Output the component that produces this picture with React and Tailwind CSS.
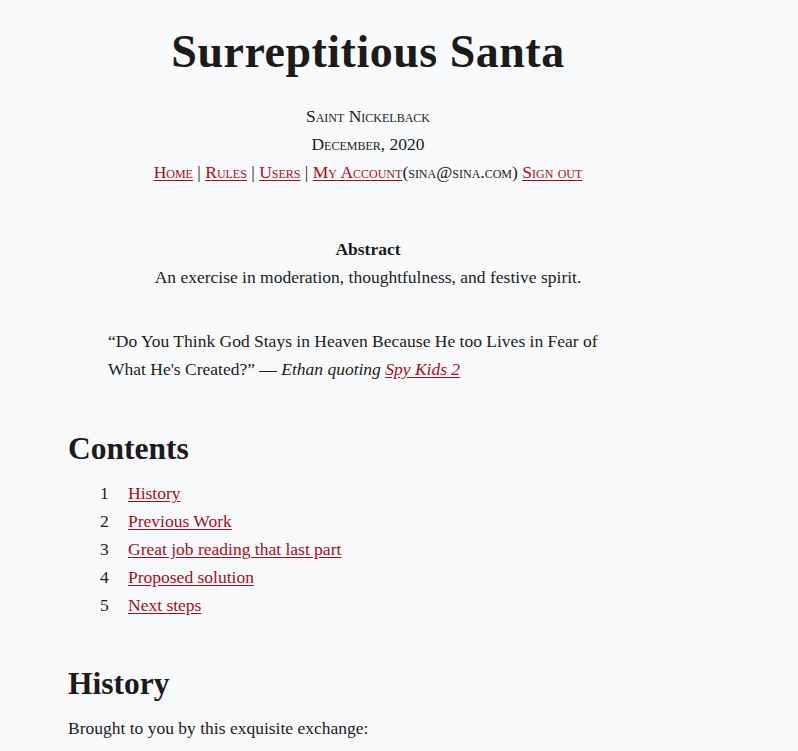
import React from 'react';

const toc = ['History', 'Previous Work', 'Great job reading that last part', 'Proposed solution', 'Next steps'];

const A = ({ children, className = '' }) => (
  <a href="#" className={`text-[#a50d1f] underline underline-offset-2 ${className}`}>{children}</a>
);

export default function App() {
  return (
    <div className="min-h-[751px] bg-[#f8f9fa] text-[#1c1b1b] font-['Liberation_Serif',serif] text-[17.5px] leading-[28px]">
      <div className="w-[600px] ml-[68px] pt-[26px]">
        {/* Title block */}
        <h1 className="text-center font-bold text-[46px] leading-[52px] tracking-[0.5px]">Surreptitious Santa</h1>
        <div className="mt-[24px] text-center [font-variant:small-caps]">
          <p>Saint Nickelback</p>
          <p>December, 2020</p>
          <p>
            <A>Home</A> | <A>Rules</A> | <A>Users</A> | <A>My Account</A>(sina@sina.com) <A>Sign out</A>
          </p>
        </div>

        {/* Abstract */}
        <div className="mt-[49px] text-center">
          <p className="font-bold">Abstract</p>
          <p>An exercise in moderation, thoughtfulness, and festive spirit.</p>
        </div>

        {/* Quote */}
        <blockquote className="mt-[36px] ml-[40px] mr-[40px]">
          “Do You Think God Stays in Heaven Because He too Lives in Fear of What He's Created?” — <i>Ethan quoting <A>Spy Kids 2</A></i>
        </blockquote>

        {/* Contents */}
        <h2 className="mt-[46px] font-bold text-[31.5px] leading-[40px]">Contents</h2>
        <ol className="mt-[10px] pl-[32px]">
          {toc.map((t, i) => (
            <li key={t} className="flex">
              <span className="w-[28px]">{i + 1}</span>
              <A>{t}</A>
            </li>
          ))}
        </ol>

        {/* History */}
        <h2 className="mt-[45px] font-bold text-[31.5px] leading-[40px]">History</h2>
        <p className="mt-[10px]">Brought to you by this exquisite exchange:</p>
      </div>
    </div>
  );
}
